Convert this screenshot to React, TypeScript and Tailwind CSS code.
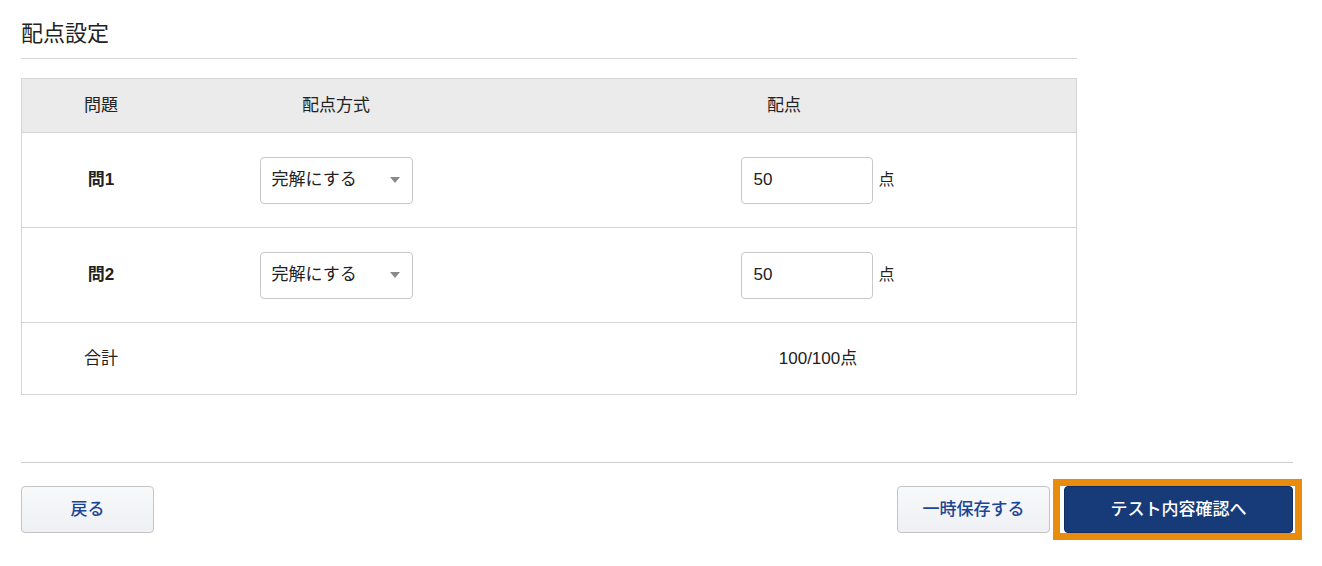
const font = { fontFamily: '"Liberation Sans", "Noto Sans CJK JP", sans-serif' };

const rows = [
  { label: "問1", method: "完解にする", score: "50" },
  { label: "問2", method: "完解にする", score: "50" },
];

function Select({ value }: { value: string }) {
  return (
    <div className="flex h-[47px] w-[153px] items-center justify-between rounded-[4px] border border-[#c9c9c9] bg-white pl-[11px] pr-[12px] text-[17px] text-[#222]">
      <span>{value}</span>
      <svg width="10" height="6" viewBox="0 0 10 6">
        <path d="M0 0h10L5 6z" fill="#8a8a8a" />
      </svg>
    </div>
  );
}

function Btn({ children, className }: { children: React.ReactNode; className: string }) {
  return (
    <button
      className={`flex h-[47px] items-center justify-center rounded-[4px] border text-[17px] font-medium ${className}`}
    >
      {children}
    </button>
  );
}

export default function App() {
  return (
    <div className="min-h-[566px] bg-white px-[21px] pt-[20px] text-[#222]" style={font}>
      <div className="w-[1056px]">
        <h2 className="pb-[10px] text-[22px] leading-[28px] text-[#222]">配点設定</h2>
        <div className="h-px bg-[#d6d6d6]" />

        <div className="mt-[19px] border border-[#d4d4d4] text-[17px]">
          <div className="grid h-[54px] grid-cols-[158px_312px_1fr] items-center border-b border-[#d4d4d4] bg-[#ebebeb] text-center">
            <div>問題</div>
            <div>配点方式</div>
            <div>配点</div>
          </div>
          {rows.map((r) => (
            <div
              key={r.label}
              className="grid h-[95px] grid-cols-[158px_312px_1fr] items-center border-b border-[#d4d4d4]"
            >
              <div className="text-center font-bold">{r.label}</div>
              <div className="flex justify-center">
                <Select value={r.method} />
              </div>
              <div className="flex items-center justify-center pl-[68px]">
                <div className="flex h-[47px] w-[132px] items-center rounded-[4px] border border-[#c9c9c9] px-[11px]">
                  {r.score}
                </div>
                <span className="ml-[5px] text-[16px]">点</span>
              </div>
            </div>
          ))}
          <div className="grid h-[71px] grid-cols-[158px_312px_1fr] items-center">
            <div className="text-center">合計</div>
            <div />
            <div className="pl-[68px] text-center">100/100点</div>
          </div>
        </div>
      </div>

      <div className="mt-[67px] h-px w-[1272px] bg-[#cfcfcf]" />

      <div className="mt-[23px] flex w-[1272px] items-center">
        <Btn className="w-[133px] border-[#c4c4c4] bg-gradient-to-b from-[#f8f9fb] to-[#eef0f3] text-[#1b4597]">
          戻る
        </Btn>
        <div className="ml-auto flex items-center gap-[14px]">
          <Btn className="w-[153px] border-[#c4c4c4] bg-gradient-to-b from-[#f8f9fb] to-[#eef0f3] text-[#1b4597]">
            一時保存する
          </Btn>
          <div className="relative">
            <Btn className="w-[229px] border-[#0f2c63] bg-[#173a78] text-white">
              テスト内容確認へ
            </Btn>
            <span className="pointer-events-none absolute -bottom-[7px] -left-[11px] -right-[9px] -top-[7px] border-[7px] border-[#e98b0c]" />
          </div>
        </div>
      </div>
    </div>
  );
}
